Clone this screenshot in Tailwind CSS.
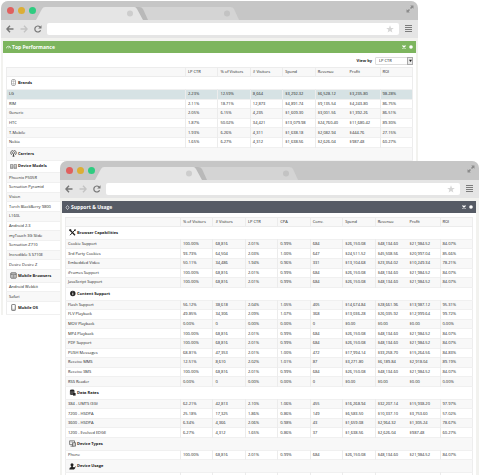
<!DOCTYPE html>
<html lang="en">
<head>
<meta charset="utf-8">
<title>Campaign reports</title>
<script src="https://cdn.jsdelivr.net/npm/@tailwindcss/browser@4"></script>
</head>
<body class="bg-white font-['Open_Sans','Noto_Sans',sans-serif] text-[4px] leading-[8px] text-[#222]">

<svg class="hidden" aria-hidden="true">
  <symbol id="tabs" viewBox="0 0 210 14">
    <path d="M95 1H194Q197 1 198 3L203 14H108Z" fill="#d4d4d4"/>
    <path d="M99 1H103Q106 1 107 3L112 14H104Z" fill="#b9b9b9"/>
    <path d="M0 14L6 3Q7 1 9 1H98Q100 1 101 3L107 14Z" fill="#e5e5e5"/>
    <circle cx="94" cy="7.500" r="3" fill="#cdcdcd"/>
    <circle cx="191" cy="7.500" r="3" fill="#c3c3c3"/>
  </symbol>
  <symbol id="expand" viewBox="0 0 8 8"><path d="M4.200 0.500H7.500V3.800L6.400 2.700L5 4L4 3L5.300 1.600ZM0.500 4.200L1.600 5.300L3 4L4 5L2.700 6.400L3.800 7.500H0.500Z" fill="#8b8b8b"/></symbol>
  <symbol id="back" viewBox="0 0 8 8"><path d="M7.500 4H1M4 .8L.9 4L4 7.200" fill="none" stroke="currentColor" stroke-width="1.400"/></symbol>
  <symbol id="reload" viewBox="0 0 8 8"><path d="M6.600 5.200A3 3 0 1 1 6 1.900" fill="none" stroke="currentColor" stroke-width="1.200"/><path d="M7.500 .3V3.600H4.200Z" fill="currentColor"/></symbol>
  <symbol id="star" viewBox="0 0 8 8"><path d="M4 .3L5 3H7.800L5.600 4.700L6.400 7.500L4 5.900L1.600 7.500L2.400 4.700L.2 3H3Z" fill="#d6d6d6"/></symbol>
  <symbol id="menu" viewBox="0 0 7 8"><path d="M0 .5H7M0 2.500H7M0 4.500H7M0 6.500H7" stroke="#7c7c7c" stroke-width="1"/></symbol>
  <symbol id="gauge" viewBox="0 0 6 6"><path d="M.5 4A2.500 2.500 0 0 1 5.500 4M3 4L4 2.300" fill="none" stroke="currentColor" stroke-width=".8"/></symbol>
  <symbol id="support" viewBox="0 0 6 6"><path d="M1.300 2.500L3 .6L4.700 2.500M1.300 3.500L3 5.400L4.700 3.500M1.300 2.500V3.500M4.700 2.500V3.500" fill="none" stroke="currentColor" stroke-width=".7"/></symbol>
  <symbol id="close" viewBox="0 0 4 4"><path d="M.5 .5L3.500 3.500M3.500 .5L.5 3.500" stroke="currentColor" stroke-width="1.100"/></symbol>
  <symbol id="gear" viewBox="0 0 4 4"><circle cx="2" cy="2" r="1.800" fill="currentColor"/></symbol>

  <symbol id="brands" viewBox="0 0 7 7"><rect x="1.500" y=".5" width="4" height="6" rx="1.500" fill="none" stroke="#777" stroke-width=".6"/><path d="M1.500 2.500H5.500M1.500 4.500H5.500M3.500 1V6" stroke="#999" stroke-width=".4"/></symbol>
  <symbol id="carriers" viewBox="0 0 7 7"><path d="M1.700 5A2.800 2.800 0 1 1 5.300 5M2.500 4A1.400 1.400 0 1 1 4.500 4" fill="none" stroke="#444" stroke-width=".7"/><path d="M3.500 2.500L4.500 6.800H2.500Z" fill="#444"/></symbol>
  <symbol id="models" viewBox="0 0 7 7"><path d="M.4 1.500H2.900V5.500H.4ZM4 1.500H6.600V5.500H4ZM.4 3H2.900M.4 4.300H2.900M4 3H6.600M4 4.300H6.600" fill="none" stroke="#666" stroke-width=".6"/></symbol>
  <symbol id="browsers" viewBox="0 0 7 7"><rect x=".8" y=".8" width="5.400" height="5.400" rx=".5" fill="#ddd" stroke="#444" stroke-width=".7"/><path d="M.8 2.300H6.200M2.500 3.800H4.500M2.500 5H4.500" stroke="#555" stroke-width=".7"/></symbol>
  <symbol id="os" viewBox="0 0 7 7"><rect x="1.700" y=".4" width="3.600" height="6.200" rx=".7" fill="none" stroke="#444" stroke-width=".7"/><path d="M2 5.300H5" stroke="#555" stroke-width=".4"/></symbol>
  <symbol id="tools" viewBox="0 0 7 7"><path d="M1 1L6 6.200" stroke="#222" stroke-width="1.300"/><path d="M6 1L1 6.200" stroke="#222" stroke-width="1"/><path d="M.3 .3H2.300L1.800 2.300L.3 2ZM5 .5L6.800 .3L6.500 2.200Z" fill="#222"/></symbol>
  <symbol id="info" viewBox="0 0 7 7"><circle cx="3.800" cy="3.500" r="2.700" fill="#222"/><path d="M3.800 3V5.200M3.800 1.600V2.400" stroke="#fff" stroke-width=".8"/></symbol>
  <symbol id="rates" viewBox="0 0 7 7"><ellipse cx="3.200" cy="1.500" rx="2.300" ry="1" fill="#222"/><path d="M.9 2H5.500V5Q3.200 6.500 .9 5.500Z" fill="#333"/><path d="M1 3H5.500M1 4.200H5" stroke="#bbb" stroke-width=".3"/><path d="M4 4H6.600V6.600H4Z" fill="#222"/></symbol>
  <symbol id="types" viewBox="0 0 7 7"><path d="M.6 .8H5.500V4.600H.6ZM1.500 6.200H4.500" fill="none" stroke="#555" stroke-width=".7"/><path d="M3.500 2.700H6.500V6.200H3.500Z" fill="#ccc" stroke="#444" stroke-width=".6"/><path d="M1.500 2H4" stroke="#777" stroke-width=".5"/></symbol>
  <symbol id="usage" viewBox="0 0 7 7"><circle cx="3" cy="1.800" r="1.500" fill="#222"/><path d="M.3 6.600Q.3 4.300 2.200 4L2.300 3H3.800L4 4L6.500 4.700L5 6.600Z" fill="#222"/><path d="M4.600 5.700L6.800 3.400" stroke="#222" stroke-width=".8"/></symbol>
</svg>

<main class="relative h-screen overflow-hidden pt-px pl-px">

  <section class="mr-[61px] rounded-t-[7px] bg-[#f2f2ef]" aria-label="Top Performance window">
    <div class="flex h-[19px] items-end rounded-t-[7px] bg-[#c6c6c6] pr-[4px] pl-[6px]">
      <div class="flex gap-[4px] self-center">
        <span class="size-[7px] rounded-full bg-[#e0605e]"></span>
        <span class="size-[7px] rounded-full bg-[#dcae35]"></span>
        <span class="size-[7px] rounded-full bg-[#2ecc80]"></span>
      </div>
      <svg class="h-[14px] w-[210px]"><use href="#tabs"/></svg>
      <button class="ml-auto flex self-start pt-[4px]" aria-label="Full screen"><svg class="size-[8px]"><use href="#expand"/></svg></button>
    </div>
    <div class="flex h-[18px] items-center bg-[#e5e5e5] pr-[6px] pl-[5px]">
      <button class="text-[#777]" aria-label="Back"><svg class="size-[8px]"><use href="#back"/></svg></button>
      <button class="ml-[6px] rotate-180 text-[#c4c4c4]" aria-label="Forward"><svg class="size-[8px]"><use href="#back"/></svg></button>
      <button class="ml-[6px] text-[#777]" aria-label="Reload"><svg class="size-[8px]"><use href="#reload"/></svg></button>
      <div class="ml-[5px] flex h-[12px] flex-1 items-center rounded-[2px] bg-white pr-[5px]">
        <input class="h-full min-w-0 flex-1 px-[3px]" aria-label="Address">
        <button aria-label="Bookmark"><svg class="size-[8px]"><use href="#star"/></svg></button>
      </div>
      <button class="ml-[6px]" aria-label="Menu"><svg class="h-[8px] w-[7px]"><use href="#menu"/></svg></button>
    </div>
    <div class="mx-[2px] pt-[3px]">
      <header class="flex h-[12px] items-center gap-[1px] bg-[#7db55e] px-[3px] text-white">
        <svg class="size-[5px]"><use href="#gauge"/></svg>
        <h1 class="text-[5px] font-bold">Top Performance</h1>
        <button class="ml-auto" aria-label="Close"><svg class="size-[4px]"><use href="#close"/></svg></button>
        <button class="ml-[2px]" aria-label="Settings"><svg class="size-[4px]"><use href="#gear"/></svg></button>
      </header>
      <div class="bg-white px-[3px]">
        <div class="flex h-[14px] items-center justify-end gap-[3px] pt-px">
          <label for="view" class="font-bold">View by</label>
          <div class="relative flex">
            <select id="view" class="h-[8px] w-[38px] appearance-none rounded-[1px] border border-[#ddd] bg-white pl-[3px] leading-[6px]"><option>LP CTR</option></select>
            <span class="pointer-events-none absolute inset-y-0 right-0 flex w-[6px] items-center justify-center border border-[#aaa] bg-[#e8e8e8]"><svg class="size-[3px]" viewBox="0 0 4 4"><path d="M0 1H4L2 4Z" fill="#222"/></svg></span>
          </div>
        </div>
        <table id="performance" class="h-[248px] w-full table-fixed border-collapse border-x border-[#ededed]">
          <colgroup><col class="w-[179px]"><col span="7"></colgroup>
        </table>
      </div>
    </div>
  </section>

  <section class="absolute top-[161px] right-0 left-[60px] rounded-t-[7px] bg-[#f2f2ef]" aria-label="Support and Usage window">
    <div class="flex h-[19px] items-end rounded-t-[7px] bg-[#c6c6c6] pr-[4px] pl-[6px]">
      <div class="flex gap-[4px] self-center">
        <span class="size-[7px] rounded-full bg-[#e0605e]"></span>
        <span class="size-[7px] rounded-full bg-[#dcae35]"></span>
        <span class="size-[7px] rounded-full bg-[#2ecc80]"></span>
      </div>
      <svg class="h-[14px] w-[210px]"><use href="#tabs"/></svg>
      <button class="ml-auto flex self-start pt-[4px]" aria-label="Full screen"><svg class="size-[8px]"><use href="#expand"/></svg></button>
    </div>
    <div class="flex h-[18px] items-center bg-[#e5e5e5] pr-[6px] pl-[5px]">
      <button class="text-[#777]" aria-label="Back"><svg class="size-[8px]"><use href="#back"/></svg></button>
      <button class="ml-[6px] rotate-180 text-[#c4c4c4]" aria-label="Forward"><svg class="size-[8px]"><use href="#back"/></svg></button>
      <button class="ml-[6px] text-[#777]" aria-label="Reload"><svg class="size-[8px]"><use href="#reload"/></svg></button>
      <div class="ml-[5px] flex h-[12px] flex-1 items-center rounded-[2px] bg-white pr-[5px]">
        <input class="h-full min-w-0 flex-1 px-[3px]" aria-label="Address">
        <button aria-label="Bookmark"><svg class="size-[8px]"><use href="#star"/></svg></button>
      </div>
      <button class="ml-[6px]" aria-label="Menu"><svg class="h-[8px] w-[7px]"><use href="#menu"/></svg></button>
    </div>
    <div class="mr-[3px] ml-[2px] pt-[3px]">
      <header class="flex h-[12px] items-center gap-[1px] bg-[#565b65] px-[3px] text-white">
        <svg class="size-[5px]"><use href="#support"/></svg>
        <h1 class="text-[5px] font-bold">Support &amp; Usage</h1>
        <button class="ml-auto" aria-label="Close"><svg class="size-[4px]"><use href="#close"/></svg></button>
        <button class="ml-[2px]" aria-label="Settings"><svg class="size-[4px]"><use href="#gear"/></svg></button>
      </header>
      <div class="bg-white px-[3px] pt-[4px]">
        <table id="usage-table" class="h-[266px] w-full table-fixed border-collapse border-x border-[#ededed]">
          <colgroup><col class="w-[115px]"><col span="9"></colgroup>
        </table>
      </div>
    </div>
  </section>
</main>

<script>
const full = '100.00%|68,816|2.01%|0.99%|684|$26,150.08|$48,134.60|$21,984.52|84.07%';
const none = '0.00%|0|0.00%|0.00%|0|$0.00|$0.00|$0.00|0.00%';

// Lines starting with # open a section: "#icon|Title".
const performanceRows = [
  '#brands|Brands',
  'LG|2.23%|12.59%|8,664|$3,292.32|$6,528.12|$3,235.80|98.28%',
  'RIM|2.11%|18.71%|12,873|$4,891.74|$9,135.54|$4,243.80|86.75%',
  'Generic|2.05%|6.15%|4,235|$1,609.30|$3,001.56|$1,392.26|86.51%',
  'HTC|1.87%|50.02%|34,421|$13,079.98|$24,760.40|$11,680.42|89.30%',
  'T-Mobile|1.93%|6.26%|4,311|$1,638.18|$2,082.94|$444.76|27.15%',
  'Nokia|1.65%|6.27%|4,312|$1,638.56|$2,626.04|$987.48|60.27%',
  '#carriers|Carriers',
  '#models|Device Models',
  'Phoenix P505R', 'Sensation Pyramid', 'Vision', 'Torch BlackBerry 9800', 'L160L', 'Android 2.3',
  'myTouch 3G Slide', 'Sensation Z710', 'Incredible S S710E', 'Desire Desire Z',
  '#browsers|Mobile Browsers',
  'Android Webkit', 'Safari',
  '#os|Mobile OS'
];
const usageRows = [
  '#tools|Browser Capabilities',
  'Cookie Support|' + full,
  '3rd Party Cookies|93.73%|64,504|2.03%|1.00%|647|$24,511.52|$45,508.56|$20,997.04|85.66%',
  'Embedded Video|50.11%|34,486|1.94%|0.96%|331|$13,104.68|$23,354.02|$10,249.34|78.21%',
  'iFrames Support|' + full,
  'JavaScript Support|' + full,
  '#info|Content Support',
  'Flash Support|56.12%|38,618|2.04%|1.05%|405|$14,674.84|$28,661.96|$13,987.12|95.31%',
  'FLV Playback|49.85%|34,306|2.09%|1.07%|368|$13,036.28|$26,035.92|$12,999.64|99.72%',
  'MOV Playback|' + none,
  'MP4 Playback|' + full,
  'PDF Support|' + full,
  'PUSH Messages|68.81%|47,353|2.01%|1.00%|472|$17,994.14|$33,258.70|$15,264.56|84.83%',
  'Receive MMS|12.51%|8,610|2.02%|1.01%|87|$3,271.80|$6,189.84|$2,918.04|89.19%',
  'Receive SMS|' + full,
  'RSS Reader|' + none,
  '#rates|Data Rates',
  '384 - UMTS (3G)|62.21%|42,813|2.10%|1.06%|455|$16,268.94|$32,207.14|$15,938.20|97.97%',
  '7200 - HSDPA|25.18%|17,325|1.86%|0.86%|149|$6,583.50|$10,337.10|$3,753.60|57.02%',
  '3600 - HSDPA|6.34%|4,366|2.06%|0.98%|43|$1,659.08|$2,964.32|$1,305.24|78.67%',
  '1200 - Evolved EDGE|6.27%|4,312|1.65%|0.86%|37|$1,638.56|$2,626.04|$987.48|60.27%',
  '#types|Device Types',
  'Phone|' + full,
  '#usage|Device Usage',
  ''
];

function fill(id, heads, rows, selected) {
  const count = heads.length;
  // The Revenue and Profit columns share one unruled block.
  const edge = i => i === 0 || heads[i] === 'Profit' ? '' : 'border-l border-[#ececec]';
  const head = heads.map((h, i) => `<th scope="col" class="whitespace-nowrap p-0 pl-[2px] text-left font-normal ${edge(i)}">${h}</th>`).join('');
  const body = rows.map((line, n) => {
    const bg = line.startsWith(selected + '|') ? 'bg-[#d6e2e4]' : n % 2 ? 'bg-[#f8f8f8]' : 'bg-white';
    const cells = line.split('|');
    if (line[0] === '#') {
      return `<tr class="h-[12px] border-y border-[#f0f0f0] ${bg}"><th colspan="${count}" scope="rowgroup" class="p-0 pl-[3px] text-left font-bold text-[#222]"><div class="flex items-center gap-[1px]"><svg class="size-[7px]"><use href="${cells[0]}"/></svg>${cells[1]}</div></th></tr>`;
    }
    return `<tr class="h-[9px] border-y border-[#f0f0f0] ${bg}">` + heads.map((_, i) =>
      `<td class="whitespace-nowrap p-0 pl-[2px] ${edge(i)}">${cells[i] || ''}</td>`).join('') + '</tr>';
  }).join('');
  document.getElementById(id).insertAdjacentHTML('beforeend',
    `<thead><tr class="h-[9px] border-y border-[#ececec] bg-[#f8f8f8]">${head}</tr></thead><tbody>${body}</tbody>`);
}
fill('performance', ['', 'LP CTR', '% of Visitors', '# Visitors', 'Spend', 'Revenue', 'Profit', 'ROI'], performanceRows, 'LG');
fill('usage-table', ['', '% of Visitors', '# Visitors', 'LP CTR', 'CPA', 'Conv.', 'Spend', 'Revenue', 'Profit', 'ROI'], usageRows, 'none');
</script>
</body>
</html>
